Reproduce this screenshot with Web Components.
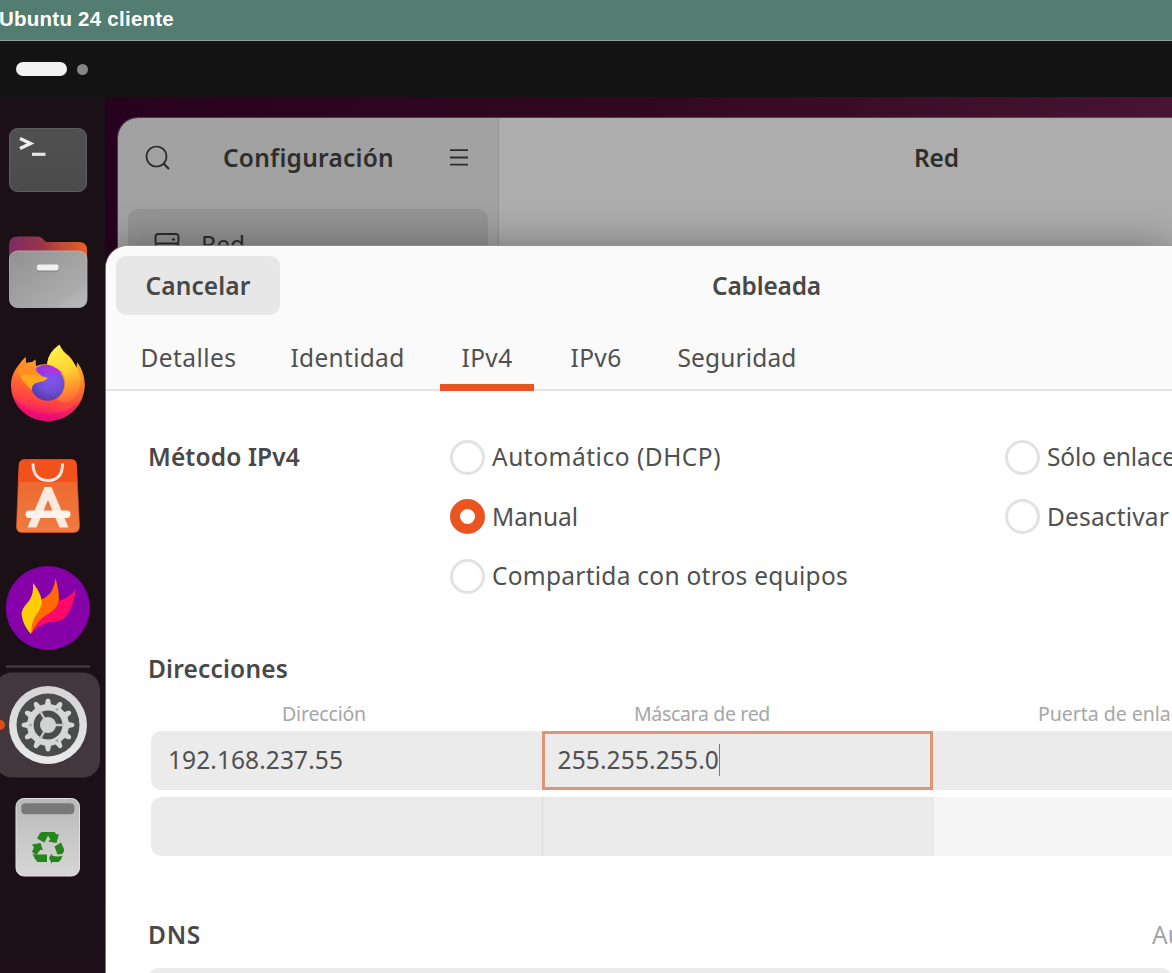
<!DOCTYPE html>
<html lang="es">
<head>
<meta charset="utf-8">
<title>Ubuntu 24 cliente</title>
<style>
html,body{margin:0;height:973px;overflow:hidden;background:#fff}
body{font-family:"Noto Sans","Open Sans",sans-serif}
</style>
</head>
<body>
<vm-screen></vm-screen>
<script>
const define=(name,html,setup)=>{
  customElements.define(name,class extends HTMLElement{
    constructor(){super();this.attachShadow({mode:'open'}).innerHTML=html}
    connectedCallback(){if(setup)setup(this,this.shadowRoot)}
  });
};

/* Text run whose tracking is adjusted so that it takes up a given width */
define('fit-text',`<style>
:host{display:inline-block;white-space:pre;line-height:30px;font-size:24.5px}
</style><slot></slot>`,(el)=>{
  const w=parseFloat(el.getAttribute('w'));
  if(!w)return;
  el.style.letterSpacing='0';
  const nat=el.getBoundingClientRect().width;
  const n=el.textContent.length;
  el.style.letterSpacing=((w-nat)/n).toFixed(3)+'px';
});

define('vm-title',`<style>
:host{display:flex;align-items:center;box-sizing:border-box;height:41px;padding-bottom:3px;background:#547d71;border-bottom:1px solid #999f9c;color:#fff;font:bold 20.500px/24px "Liberation Sans",Arial,sans-serif}
fit-text{font-size:20.500px;line-height:24px;margin-left:-1px}
</style><fit-text w="175">Ubuntu 24 cliente</fit-text>`);

define('top-bar',`<style>
:host{display:flex;align-items:center;gap:10px;height:56px;padding-left:16px;background:#131313;box-sizing:border-box}
.pill{width:51px;height:14px;border-radius:7px;background:#f2f2f2}
.dot{width:11px;height:11px;border-radius:50%;background:#868686}
</style><span class="pill"></span><span class="dot"></span>`);

const gearTeeth=Array.from({length:12},(_,i)=>`<path d="M44.500 706 46 699.600Q48 697.500 50 699.600L51.500 706Z" transform="rotate(${i*30} 48 725)"/>`).join('');

define('app-dock',`<style>
:host{display:flex;flex-direction:column;width:105px;flex:none;padding-top:13px;box-sizing:border-box;background:linear-gradient(#1b1015,#1c1017 70%,#1e0f18)}
svg{display:block;flex:none}
</style>
<svg width="105" height="105" viewBox="0 110 105 105">
 <defs><linearGradient id="t" x2="0" y2="1"><stop stop-color="#505050"/><stop offset="1" stop-color="#4b4b4b"/></linearGradient></defs>
 <rect x="9.5" y="128.5" width="77" height="63" rx="8" fill="url(#t)" stroke="#605f5f"/>
 <path d="M20 138.600 30.500 143.500 20 148.400" fill="none" stroke="#eee" stroke-width="3.300"/>
 <path d="M32 154.300H45.500" stroke="#e4e4e4" stroke-width="3.200"/>
</svg>
<svg width="105" height="110" viewBox="0 215 105 110">
 <defs><linearGradient id="fo"><stop stop-color="#7c2c62"/><stop offset=".4" stop-color="#98344b"/><stop offset=".7" stop-color="#c24d35"/><stop offset="1" stop-color="#e9602b"/></linearGradient>
 <linearGradient id="fg" x2="1" y2="1"><stop stop-color="#919191"/><stop offset=".8" stop-color="#adadad"/><stop offset=".81" stop-color="#b1b1b1"/><stop offset="1" stop-color="#bababa"/></linearGradient></defs>
 <path d="M9 268V245Q9 236.500 18 236.500H38Q41 236.500 43 239L46 242H79Q87 242 87 250V268Z" fill="url(#fo)"/>
 <rect x="9.500" y="251" width="77.500" height="56.500" rx="8" fill="url(#fg)" stroke="#b8b8b8" stroke-width=".8"/>
 <rect x="37" y="266" width="22" height="6" rx="2" fill="#777" opacity=".5"/>
 <rect x="37" y="264.500" width="21.500" height="6" rx="2" fill="#f0f0f0"/>
</svg>
<svg width="105" height="115" viewBox="0 325 105 115">
 <defs>
 <linearGradient id="ff" gradientUnits="userSpaceOnUse" x1="60" y1="350" x2="45" y2="421"><stop stop-color="#ffc52c"/><stop offset=".3" stop-color="#ff9427"/><stop offset=".55" stop-color="#ff6332"/><stop offset=".78" stop-color="#ff3d49"/><stop offset=".95" stop-color="#f01070"/></linearGradient>
 <radialGradient id="fp" cx=".6" cy=".35" r=".75"><stop stop-color="#8752f1"/><stop offset=".5" stop-color="#6f50d5"/><stop offset="1" stop-color="#4d35a0"/></radialGradient>
 <linearGradient id="fy" x1=".3" x2=".6" y2="1"><stop stop-color="#fff34a"/><stop offset=".5" stop-color="#ffd030"/><stop offset="1" stop-color="#ff9130" stop-opacity=".3"/></linearGradient>
 <linearGradient id="fv"><stop stop-color="#9436e0"/><stop offset="1" stop-color="#c033df"/></linearGradient></defs>
 <path d="M25.500 357 26 363Q30 362 32 362L35.500 359.500 36 366Q41 364 47 364Q49 352 59.500 344.500Q62 351 69 356Q74 361 76.500 370L77 362Q84 371 84.800 384C85 405 68 421 48 421C27 421 11 405 11 385C11 374 17 366 25.500 357Z" fill="url(#ff)"/>
 <circle cx="47.500" cy="384" r="16.800" fill="url(#fp)"/>
 <path d="M36 368Q45 362 53 366Q61 369 64 374Q58 371 57 375Q48 371 42 375Q36 373 36 368Z" fill="url(#fv)"/>
 <path d="M47 364Q48 352 59.500 345Q62 352 69 357Q77 365 81 378Q81 394 71 401Q62 405 57 399Q68 390 64 376Q60 368 47 364Z" fill="url(#fy)"/>
 <path d="M25.500 357.500Q24.500 366 36 371L42 376 36 380 21 378 17 372Z" fill="#ff9020"/>
 <path d="M21.500 376Q30 374 38 375.500Q43 376 48 378Q44 382 39 382Q31 384 32 390Q25 384 21.500 379Z" fill="#ffa81f"/>
 <path d="M13 396Q28 414 47 414Q68 414 80 400Q70 421 48 421Q21 420 13 396Z" fill="#e7067a" opacity=".5"/>
</svg>
<svg width="105" height="110" viewBox="0 440 105 110">
 <defs><linearGradient id="sh" x2="0" y2="1"><stop stop-color="#ec622b"/><stop offset="1" stop-color="#f07b40"/></linearGradient></defs>
 <path d="M25 459.500H71Q76 459.500 76.500 464.500L79.500 526Q79.500 532.500 73.500 532.500H22.500Q16 532.500 16.500 526L19 465Q19.500 459.500 25 459.500Z" fill="url(#sh)" stroke="#d9541f" stroke-width=".6"/>
 <path d="M25 459.500H71Q76 459.500 76.500 464.500L77.300 482H18.200L19 465Q19.500 459.500 25 459.500Z" fill="#f2511b"/>
 <path d="M33 463.500C33 475 39 480.500 48 480.500C57 480.500 62.500 475 62.500 463.500" fill="none" stroke="#f7e4dc" stroke-width="3"/>
 <path fill-rule="evenodd" d="M44.500 487H51.500L68.500 527.500H59.500L48 500 36.500 527.500H27.500ZM48 498" fill="#fbe8df"/>
 <rect x="25.500" y="510.500" width="45" height="7.500" rx="3.700" fill="#fff3ed"/>
</svg>
<svg width="105" height="112" viewBox="0 550 105 112">
 <circle cx="47.800" cy="608" r="42" fill="#8500a8"/>
 <path d="M76 589Q74 604 68 614Q62 623 50 622Q37 625 31.500 634Q32 621 43 613Q51 605 59 601Q69 598 76 589Z" fill="#ff0b67"/>
 <path d="M55.500 578Q59 590 59 600Q58 608 48 614Q37 620 31 634Q29 622 36 607Q38 601 46 597Q54 592 55.500 578Z" fill="#ff6b00"/>
 <path d="M33 583Q41 593 42 602Q41 609 36 615Q31 623 31 634Q23 626 21.500 614Q22 608 29 601Q34 594 33 583Z" fill="#ffcc05"/>
</svg>
<svg width="105" height="123" viewBox="0 662 105 123">
 <defs><linearGradient id="se" x2="0" y2="1"><stop stop-color="#d4d4d4"/><stop offset="1" stop-color="#eaeaea"/></linearGradient></defs>
 <path d="M6 666.500H90" stroke="#4a4146" stroke-width="1.800"/>
 <rect x="-5" y="672.500" width="105" height="105" rx="17" fill="#42373d"/>
 <circle cx="0" cy="725" r="5" fill="#dd4a18"/>
 <circle cx="48" cy="725" r="39" fill="url(#se)"/><circle cx="48" cy="725" r="31.500" fill="#4b4d4c"/>
 <g fill="#d6d6d6">${gearTeeth}</g>
 <circle cx="48" cy="725" r="17.700" fill="none" stroke="#d6d6d6" stroke-width="6.500"/>
 <g stroke="#c6c6c6" stroke-width="2.400"><path d="M48 725H64M48 725 40 711M48 725 40 739"/></g>
 <circle cx="48" cy="725" r="8" fill="#d2d2d2"/>
 <g fill="#aaa"><circle cx="30.500" cy="725" r="1.500"/><circle cx="57" cy="709.500" r="1.500"/><circle cx="57" cy="740.500" r="1.500"/></g>
</svg>
<svg width="105" height="115" viewBox="0 785 105 115">
 <defs><linearGradient id="tr" x2="0" y2="1"><stop stop-color="#b9b9b9"/><stop offset="1" stop-color="#d6d6d6"/></linearGradient></defs>
 <rect x="16" y="798.500" width="63.500" height="77.500" rx="8" fill="url(#tr)" stroke="#e0e0e0"/>
 <rect x="21.300" y="803.300" width="53" height="11" rx="4" fill="#787878"/>
 <g fill="#23851b">
  <path d="M42 832H54.500L56.500 834.500 59 834 56.500 843 48 841.500 50.500 839.500 48 835.500 44.500 842.500 37 838.500 40 833Z"/>
  <path d="M54.500 846.500 61 842.500 64 849Q64.500 852 62 854L57.500 854.500Z"/>
  <path d="M51.500 853.500 49 858 52 864V862H58Q61 861 62.500 855.500Q58 857.500 52 855.500Z"/>
  <path d="M35.500 854.500H47V862H37.500Q34.500 859 32.500 854Z"/>
  <path d="M32 844.500 40.500 843 43 850.500 40.500 849.500 36.500 855 32 852 34 847.500Z"/>
 </g>
</svg>`);

define('settings-window',`<style>
:host{display:flex;height:200px;margin:21px 0 0 13px;border-radius:20px 0 0 0;overflow:hidden;color:#2e2e2e;box-shadow:0 0 1px 1px rgba(190,150,180,.35)}
.side{width:380px;flex:none;background:#a2a2a2;border-right:1px solid #949494}
.head{display:flex;height:91px;box-sizing:border-box;padding:24px 0 0 27px}
.head svg{flex:none}
.head fit-text{margin:1px 55px 0 52px}
.row{display:flex;height:66px;margin:0 10px;background:#949494;border-radius:10px;padding:20px 0 0 26px}
.row fit-text{margin:1px 0 0 21px}
.main{flex:1;background:#adadad;padding:25px 0 0 415px}
fit-text{height:30px}
b{font-weight:600}
</style>
<div class="side"><div class="head">
<svg width="26" height="30" viewBox="145 142 26 30" fill="none" stroke="#2c2c2c" stroke-width="1.700"><circle cx="156.500" cy="156.500" r="10"/><path d="M163.500 163.500 169 169" stroke-width="2.200"/></svg>
<fit-text w="171"><b>Configuración</b></fit-text>
<svg width="20" height="30" viewBox="449 142 20 30" stroke="#2c2c2c" stroke-width="1.800"><path d="M450 150.200H468M450 157.500H468M450 164.700H468"/></svg></div>
<div class="row"><svg width="26" height="28" viewBox="154 229 26 28" fill="none" stroke="#2c2c2c" stroke-width="1.900"><path d="M155.500 243V237Q155.500 234 158.500 234H175.500Q178.500 234 178.500 237V241Q178.500 243.500 176 243.500H158Q155.500 243.500 155.500 246V252M178.500 252V246Q178.500 243.500 176 243.500"/><path d="M172 239.500H175"/></svg><fit-text w="44">Red</fit-text></div></div>
<div class="main"><fit-text w="45"><b>Red</b></fit-text></div>`);

define('tab-item',`<style>
:host{display:flex;box-sizing:border-box;justify-content:center;height:65px;padding-top:16.500px}
:host([active]){border-bottom:7px solid #e95420}
</style><slot></slot>`);

define('radio-option',`<style>
:host{display:flex;align-items:center;gap:7px;height:59.500px}
i{box-sizing:border-box;width:35px;height:35px;flex:none;border-radius:50%;border:3px solid #e2e2e2;background:#fff}
:host([checked]) i{border:10.500px solid #e95420}
</style><i></i><slot></slot>`);

define('entry-cell',`<style>
:host{display:flex;align-items:center;box-sizing:border-box;width:391px;flex:none;height:59px;padding:0 0 0 17px;background:#ebebeb}
:host([first]){border-radius:10px 0 0 10px}
:host([line]){border-left:1px solid #dcdcdc}
:host([muted]){background:#f5f5f5;border-left-color:#e8e8e8}
:host([focused]){border:3px solid #dd9479;padding:0 0 0 12.500px}
i{display:none;width:1px;height:32px;background:#777}
:host([focused]) i{display:block}
</style><slot></slot><i></i>`);

define('connection-dialog',`<style>
:host{display:flex;flex-direction:column;background:#fff;border-radius:22px 0 0 0;overflow:hidden;color:#505050;box-shadow:0 0 0 1px rgba(150,150,150,.75),0 0 42px rgba(0,0,0,.36)}
header{display:flex;flex:none;height:80px;box-sizing:border-box;padding:10px 0 0 10px;background:#fafafa}
.cancel{display:flex;justify-content:center;width:164px;height:59px;box-sizing:border-box;padding-top:15px;border-radius:10px;background:#e7e7e7}
.title{margin:15px 0 0 432px}
nav{display:flex;flex:none;height:65px;box-sizing:border-box;padding-left:3px;background:linear-gradient(#fafafa 63px,#e4e4e4 63px)}
nav tab-item{flex:none}
b{font-weight:600;color:#484848}
.method{display:grid;grid-template-columns:302px 555px 400px;padding:36.500px 0 0 42px;height:183px;flex:none}
.method b{display:block;margin-top:14.500px}
h2{margin:0 0 0 42px;font-weight:600;font-size:24.500px;line-height:30px;padding-top:43px;height:43px;flex:none;color:#484848}
.cols{display:flex;color:#a6a6a6;height:34px;flex:none;align-items:center;padding-left:176px}
.cols fit-text{font-size:19.500px;flex:none}
.rows{display:flex;flex:none;flex-direction:column;gap:7px;margin-left:45px}
.row{display:flex}
.dns{display:flex;flex:none;align-items:center;margin:62px 0 0 42px;height:34px}
.auto{margin-left:951px;color:#a4a4a4}
.entry{flex:none;height:59px;margin:16px 0 0 42px;background:#ebebeb;border-radius:10px}
</style>
<header><div class="cancel"><fit-text w="105"><b>Cancelar</b></fit-text></div><fit-text class="title" w="109"><b>Cableada</b></fit-text></header>
<nav>
<tab-item style="width:159px"><fit-text w="96">Detalles</fit-text></tab-item>
<tab-item style="width:159px"><fit-text w="114">Identidad</fit-text></tab-item>
<tab-item active style="width:94px;margin-left:13px"><fit-text w="51">IPv4</fit-text></tab-item>
<tab-item style="width:94px;margin-left:15px"><fit-text w="51">IPv6</fit-text></tab-item>
<tab-item style="width:164px;margin-left:12px"><fit-text w="119">Seguridad</fit-text></tab-item>
</nav>
<section class="method">
<div><b><fit-text w="152">Método IPv4</fit-text></b></div>
<div><radio-option><fit-text w="229">Automático (DHCP)</fit-text></radio-option>
<radio-option checked><fit-text w="86">Manual</fit-text></radio-option>
<radio-option><fit-text w="356">Compartida con otros equipos</fit-text></radio-option></div>
<div><radio-option><fit-text w="129">Sólo enlace</fit-text></radio-option>
<radio-option><fit-text w="122">Desactivar</fit-text></radio-option></div>
</section>
<h2><fit-text w="140">Direcciones</fit-text></h2>
<div class="cols"><fit-text w="84">Dirección</fit-text><fit-text w="136" style="margin-left:268px">Máscara de red</fit-text><fit-text w="142" style="margin-left:268px">Puerta de enlac</fit-text></div>
<div class="rows">
<div class="row"><entry-cell first><fit-text w="175">192.168.237.55</fit-text></entry-cell><entry-cell focused><fit-text w="161.500">255.255.255.0</fit-text></entry-cell><entry-cell></entry-cell></div>
<div class="row"><entry-cell first></entry-cell><entry-cell line></entry-cell><entry-cell line muted></entry-cell></div>
</div>
<div class="dns"><b><fit-text w="53">DNS</fit-text></b><fit-text class="auto">Au</fit-text></div>
<div class="entry"></div>`);

define('vm-screen',`<style>
:host{display:flex;flex-direction:column;width:1172px;height:973px;overflow:hidden}
.work{display:flex;flex:1;min-height:0}
.desktop{position:relative;flex:1;overflow:hidden;display:flow-root;background:linear-gradient(90deg,#27021e,#31081f 50%,#471431)}
connection-dialog{position:absolute;left:1px;top:149px;right:0;bottom:0}
</style>
<vm-title></vm-title><top-bar></top-bar>
<div class="work"><app-dock></app-dock>
<div class="desktop"><settings-window></settings-window><connection-dialog></connection-dialog></div></div>`);
</script>
</body>
</html>
